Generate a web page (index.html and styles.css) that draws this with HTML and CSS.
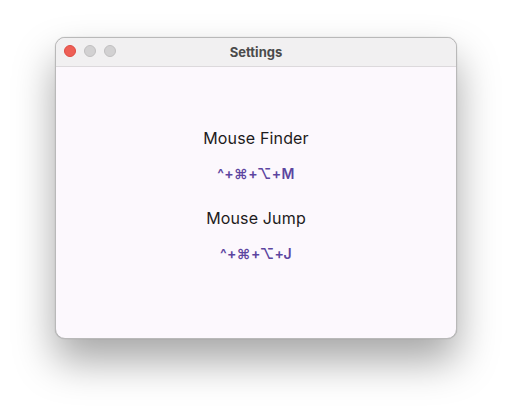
FILE: index.html
```html
<!DOCTYPE html>
<html>
<head>
<meta charset="utf-8">
<link rel="stylesheet" href="styles.css">
</head>
<body>
<div class="stage">
  <div class="window">
    <div class="titlebar">
      <div class="lights">
        <span class="light red"></span>
        <span class="light gray"></span>
        <span class="light gray"></span>
      </div>
      <div class="title">Settings</div>
    </div>
    <div class="content">
      <div class="item">
        <div class="label">Mouse Finder</div>
        <div class="shortcut">^+⌘+⌥+M</div>
      </div>
      <div class="item">
        <div class="label">Mouse Jump</div>
        <div class="shortcut">^+⌘+⌥+J</div>
      </div>
    </div>
  </div>
</div>
</body>
</html>
```

FILE: styles.css
```css
html, body {
  margin: 0;
  padding: 0;
  background: #ffffff;
}
body {
  width: 512px;
  height: 412px;
  overflow: hidden;
  font-family: Inter, "Noto Sans", "DejaVu Sans", sans-serif;
}
.stage {
  padding: 37px 0 0 55px;
}
.window {
  width: 400px;
  height: 300px;
  border: 1px solid #b9b9b9;
  border-radius: 10px;
  overflow: hidden;
  display: flex;
  flex-direction: column;
  background: #fcf8fd;
  box-shadow: 0 22px 40px rgba(0, 0, 0, 0.35), 0 0 1px rgba(0,0,0,0.3);
}
.titlebar {
  height: 28px;
  flex: none;
  background: #f1f0f1;
  border-bottom: 1px solid #dcd9dc;
  display: flex;
  align-items: center;
  justify-content: center;
  position: relative;
}
.lights {
  position: absolute;
  left: 8px;
  top: 7px;
  display: flex;
  gap: 8px;
}
.light {
  width: 12px;
  height: 12px;
  border-radius: 50%;
  box-sizing: border-box;
}
.red {
  background: #ee5f56;
  border: 1px solid #de4a42;
}
.gray {
  background: #d2d1d2;
  border: 1px solid #c0bfc0;
}
.title {
  font-family: Inter, "Liberation Sans", Arial, sans-serif;
  font-weight: 700;
  font-size: 13px;
  color: #4b4b4b;
}
.content {
  flex: 1;
  display: flex;
  flex-direction: column;
  align-items: center;
  padding-top: 61px;
  gap: 24px;
}
.item {
  display: flex;
  flex-direction: column;
  align-items: center;
  gap: 16px;
}
.label {
  font-size: 16px;
  line-height: 20px;
  color: #1d1b20;
  letter-spacing: 0.15px;
}
.shortcut {
  font-size: 14px;
  line-height: 20px;
  font-weight: 600;
  color: #5c45a0;
  letter-spacing: 0.4px;
}
```
